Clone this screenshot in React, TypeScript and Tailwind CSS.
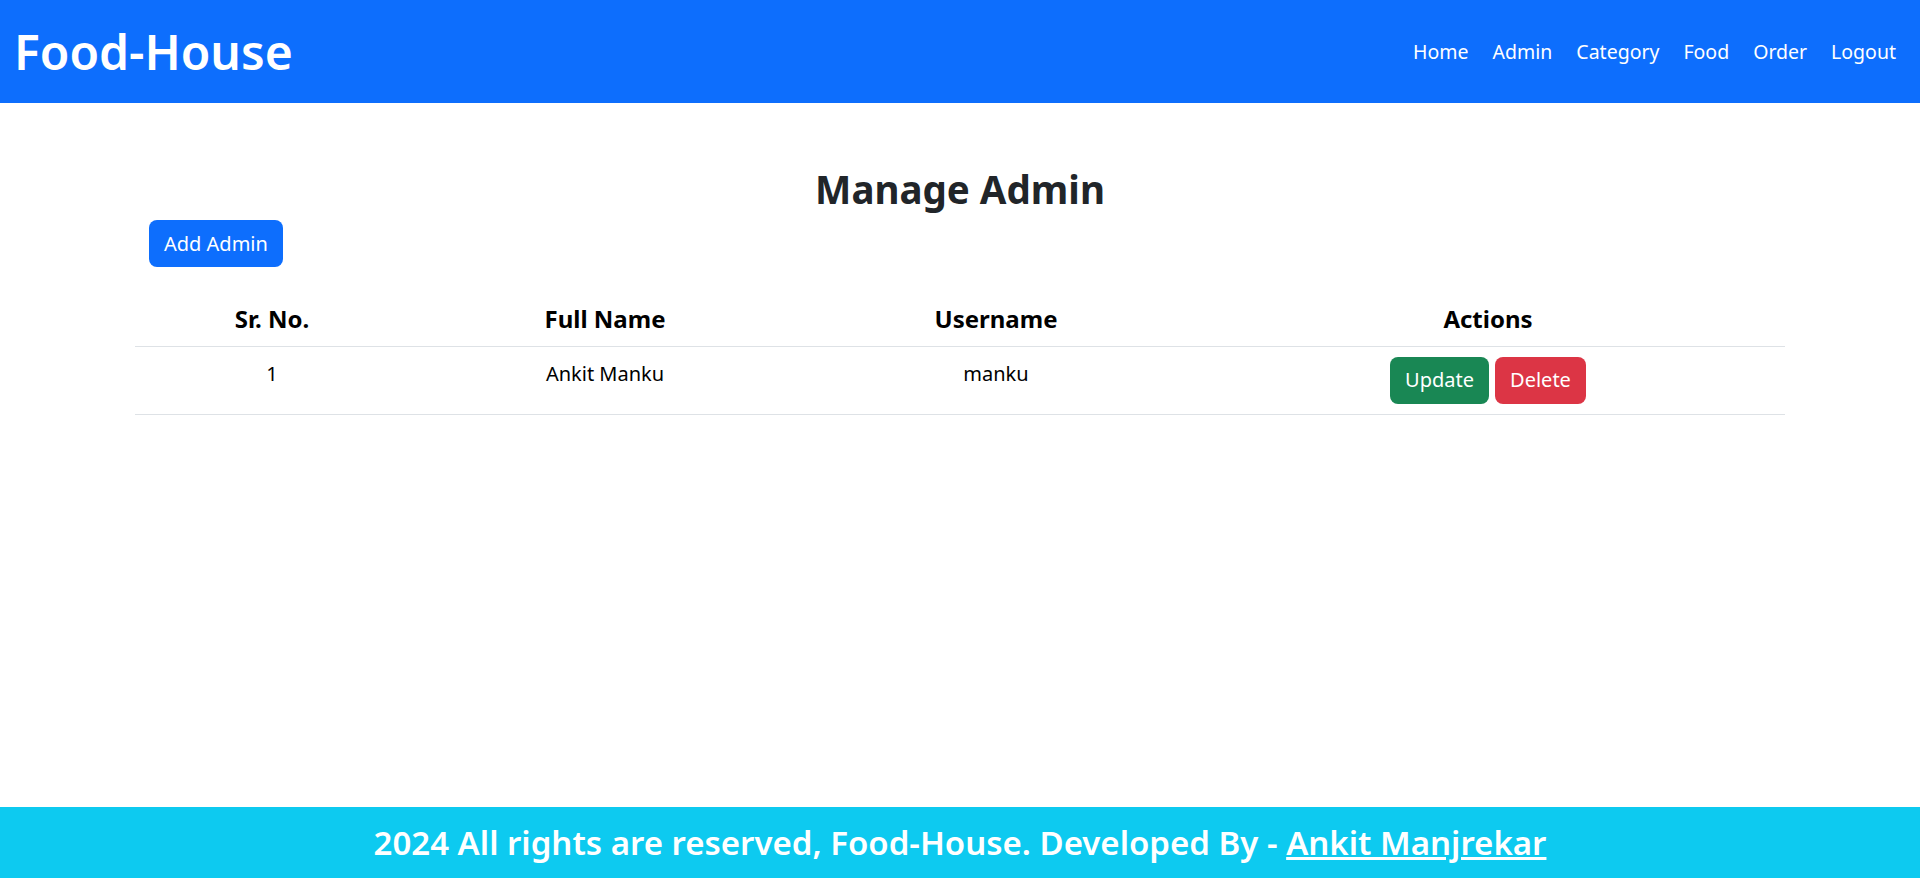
const admins = [{ id: 1, fullName: "Ankit Manku", username: "manku" }];

const navLinks = ["Home", "Admin", "Category", "Food", "Order", "Logout"];

export default function App() {
  return (
    <div className="flex min-h-[878px] flex-col bg-white font-['Noto_Sans',sans-serif] text-[#212529]">
      {/* NAVBAR */}
      <nav className="flex h-[103px] items-center justify-between bg-[#0d6efd] pl-[14px] pr-3">
        <a href="#" className="text-[48px] font-semibold leading-none text-white">
          Food-House
        </a>
        <ul className="flex items-center">
          {navLinks.map((l) => (
            <li key={l}>
              <a href="#" className="px-3 text-[19.5px] text-white">
                {l}
              </a>
            </li>
          ))}
        </ul>
      </nav>

      {/* CONTENT */}
      <main className="flex-1 px-[135px] pt-[62px]">
        <h1 className="text-center text-[38.5px] font-bold leading-[48px]">Manage Admin</h1>
        <button className="ml-[14px] mt-[7px] h-[47px] rounded-lg bg-[#0d6efd] px-[15px] text-[20px] text-white">
          Add Admin
        </button>

        <table className="mt-[26px] w-full border-collapse text-black">
          <thead>
            <tr className="h-[53px] border-b border-[#dee2e6] text-[24px] font-bold">
              <th className="w-[274px]">Sr. No.</th>
              <th className="w-[392px]">Full Name</th>
              <th className="w-[390px]">Username</th>
              <th>Actions</th>
            </tr>
          </thead>
          <tbody>
            {admins.map((a, i) => (
              <tr key={a.id} className="h-[68px] border-b border-[#dee2e6] text-center text-[20px]">
                <td className="pb-3 align-middle">{i + 1}</td>
                <td className="pb-3 align-middle">{a.fullName}</td>
                <td className="pb-3 align-middle">{a.username}</td>
                <td className="align-middle">
                  <div className="flex justify-center gap-[6px]">
                    <button className="h-[47px] rounded-lg bg-[#198754] px-[15px] text-[20px] text-white">
                      Update
                    </button>
                    <button className="h-[47px] rounded-lg bg-[#dc3545] px-[15px] text-[20px] text-white">
                      Delete
                    </button>
                  </div>
                </td>
              </tr>
            ))}
          </tbody>
        </table>
      </main>

      {/* FOOTER */}
      <footer className="flex h-[71px] items-center justify-center bg-[#0dcaf0]">
        <h2 className="text-[33px] font-semibold text-white">
          2024 All rights are reserved, Food-House. Developed By -{" "}
          <a href="#" className="underline">
            Ankit Manjrekar
          </a>
        </h2>
      </footer>
    </div>
  );
}
